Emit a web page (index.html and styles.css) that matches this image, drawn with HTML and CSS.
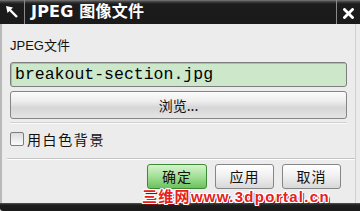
FILE: index.html
```html
<!DOCTYPE html>
<html lang="zh">
<head>
<meta charset="utf-8">
<link rel="stylesheet" href="styles.css">
</head>
<body>
<div class="window">
  <div class="titlebar">
    <div class="tb-icon">
      <svg width="12" height="12" viewBox="0 0 12 12"><polygon points="0,0 7,1.5 1.5,7" fill="#fff"/><line x1="3" y1="3" x2="11" y2="11" stroke="#fff" stroke-width="2.4"/></svg>
    </div>
    <div class="tb-title">JPEG 图像文件</div>
    <div class="tb-close">
      <svg width="11" height="11" viewBox="0 0 11 11"><path d="M1.5 1.5 L9.5 9.5 M9.5 1.5 L1.5 9.5" stroke="#fff" stroke-width="2.8" stroke-linecap="square"/></svg>
    </div>
  </div>
  <div class="content">
    <div class="label">JPEG文件</div>
    <div class="field">breakout-section.jpg</div>
    <div class="browse">浏览...</div>
    <div class="divider"></div>
    <div class="check-row">
      <span class="checkbox"></span>
      <span class="check-label">用白色背景</span>
    </div>
    <div class="separator"></div>
    <div class="actions">
      <div class="btn btn-ok">确定</div>
      <div class="btn">应用</div>
      <div class="btn">取消</div>
    </div>
    <div class="watermark">三维网www.3dportal.cn</div>
  </div>
  <div class="bottombar"></div>
</div>
</body>
</html>
```
FILE: styles.css
```css
* { box-sizing: border-box; }
html, body { margin: 0; padding: 0; }
body {
  width: 360px;
  height: 211px;
  overflow: hidden;
  background: #ebebeb;
  font-family: "Liberation Sans", "Noto Sans CJK SC", sans-serif;
}
.window {
  width: 360px;
  height: 211px;
  display: flex;
  flex-direction: column;
}
.titlebar {
  height: 24px;
  display: flex;
  align-items: stretch;
  background: linear-gradient(#7a7a7a 0px, #3a3a3a 2px, #1c1c1c 4px, #1a1a1a 100%);
  color: #fff;
}
.tb-icon {
  width: 25px;
  border-right: 1px solid #8a8a8a;
  display: flex;
  align-items: flex-start;
  justify-content: flex-start;
  padding: 6px 0 0 6px;
}
.tb-title {
  flex: 1;
  padding-left: 6px;
  font-family: "DejaVu Sans", "Noto Sans CJK SC", sans-serif;
  font-weight: bold;
  font-size: 16px;
  line-height: 24px;
  letter-spacing: 0.2px;
}
.tb-close {
  width: 24px;
  border-left: 1px solid #8a8a8a;
  display: flex;
  padding: 8px 0 0 6px;
}
.content {
  position: relative;
  flex: 1;
  display: flex;
  flex-direction: column;
  padding: 14px 12px 0 8px;
  border-left: 2px solid #b9b9b9;
  border-right: 1px solid #d0d0d0;
  margin-right: 4px;
  background: #ececec;
}
.label {
  font-size: 13px;
  line-height: 16px;
  color: #111;
  font-family: "Liberation Sans", "Noto Sans CJK SC", sans-serif;
}
.field {
  margin-top: 8px;
  height: 25px;
  border: 1px solid #7e7e7e;
  border-radius: 3px;
  background: #cde7cb;
  box-shadow: inset 1px 1px 0 #a9bfa8;
  font-family: "Liberation Mono", monospace;
  font-size: 16.5px;
  line-height: 23px;
  padding-left: 4px;
  color: #000;
  margin-right: -4px;
}
.browse {
  margin-top: 4px;
  height: 28px;
  border: 1px solid #858585;
  border-radius: 3px;
  background: linear-gradient(#fbfbfb 0%, #eeeeee 35%, #d6d6d6 60%, #e4e4e4 100%);
  text-align: center;
  font-family: "Noto Sans CJK SC", sans-serif;
  font-size: 14px;
  line-height: 26px;
  color: #111;
  margin-right: -4px;
}
.divider {
  margin-top: 3px;
  height: 2px;
  border-top: 1px solid #d2d2d2;
  border-bottom: 1px solid #fafafa;
  margin-right: -4px;
}
.check-row {
  margin-top: 4px;
  height: 22px;
  display: flex;
  align-items: center;
}
.checkbox {
  width: 14px;
  height: 14px;
  border: 1px solid #7c7c7c;
  border-radius: 2px;
  background: linear-gradient(#dcdcdc, #fbfbfb);
}
.check-label {
  margin-left: 3px;
  font-family: "Noto Sans CJK SC", sans-serif;
  font-size: 14px;
  letter-spacing: 1.6px;
  color: #111;
}
.separator {
  margin-top: 8px;
  margin-left: -3px;
  margin-right: -12px;
  height: 2px;
  border-top: 1px solid #c4c4c4;
  border-bottom: 1px solid #ffffff;
  border-radius: 1px 0 0 1px;
}
.actions {
  margin-top: 4px;
  display: flex;
  justify-content: flex-end;
  gap: 8px;
  margin-right: 2px;
}
.btn {
  width: 59px;
  height: 25px;
  border: 1px solid #868686;
  border-radius: 3px;
  background: linear-gradient(#ffffff 0%, #f1f1f1 45%, #d8d8d8 100%);
  text-align: center;
  font-family: "Noto Sans CJK SC", sans-serif;
  font-size: 14px;
  line-height: 23px;
  letter-spacing: 1px;
  color: #111;
}
.btn-ok {
  width: 60px;
  border-color: #3d8a34;
  background: linear-gradient(#d4f4cc 0%, #a8e29c 45%, #6cc25e 100%);
}
.watermark {
  position: absolute;
  left: 140px;
  top: 165px;
  font-family: "Liberation Sans", "Noto Sans CJK SC", sans-serif;
  font-weight: bold;
  font-size: 15px;
  line-height: 15px;
  letter-spacing: 1.3px;
  color: #e8201c;
  text-shadow:
    1px 0 0 #fff, -1px 0 0 #fff, 0 1px 0 #fff, 0 -1px 0 #fff,
    1px 1px 0 #fff, -1px -1px 0 #fff, 1px -1px 0 #fff, -1px 1px 0 #fff,
    2px 2px 0 #7a1010;
}
.bottombar {
  height: 8px;
  background: linear-gradient(#555 0px, #1e1e1e 2px, #1a1a1a 100%);
  border-bottom-left-radius: 3px;
}
```
